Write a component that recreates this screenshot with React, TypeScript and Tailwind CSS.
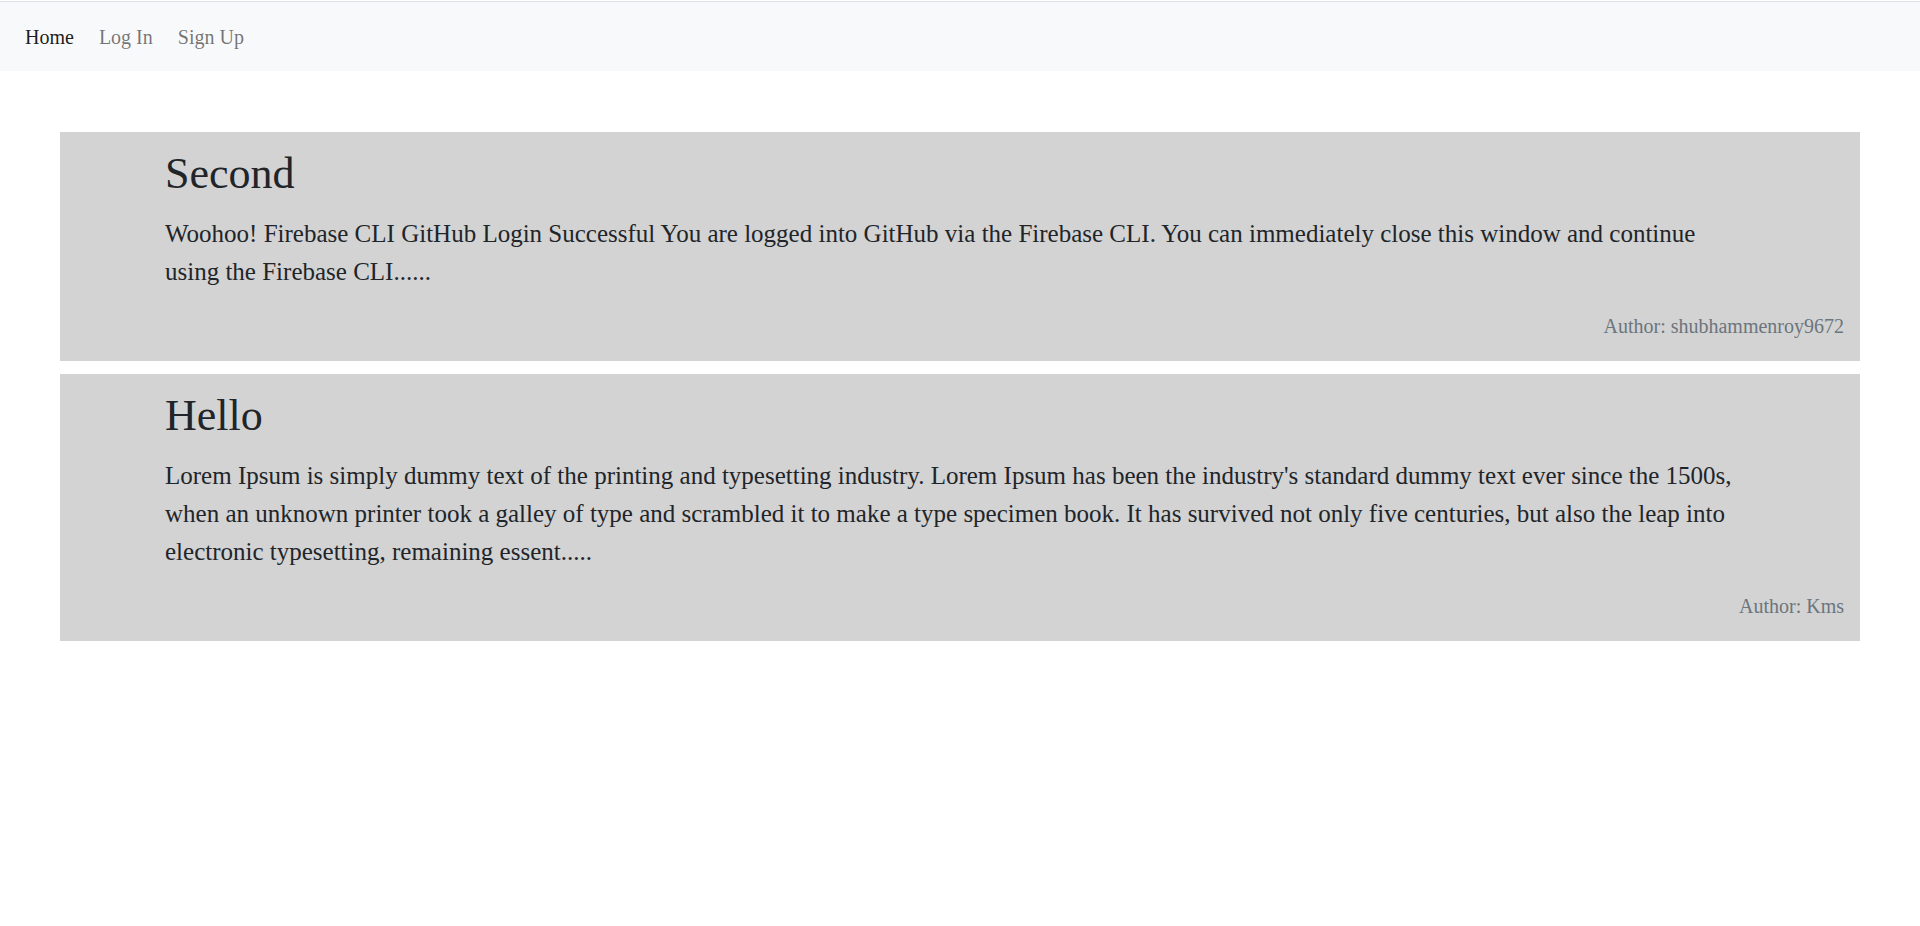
import React from "react";

const posts = [
  {
    title: "Second",
    body: "Woohoo! Firebase CLI GitHub Login Successful You are logged into GitHub via the Firebase CLI. You can immediately close this window and continue using the Firebase CLI......",
    author: "shubhammenroy9672",
  },
  {
    title: "Hello",
    body: "Lorem Ipsum is simply dummy text of the printing and typesetting industry. Lorem Ipsum has been the industry's standard dummy text ever since the 1500s, when an unknown printer took a galley of type and scrambled it to make a type specimen book. It has survived not only five centuries, but also the leap into electronic typesetting, remaining essent.....",
    author: "Kms",
  },
];

export default function App() {
  return (
    <div className="min-h-[926px] bg-white text-[#212529] font-['Liberation_Serif','Times_New_Roman',serif]">
      <div className="pt-px">
        <nav className="h-[70px] border-t border-[#dee2e6] bg-[#f8f9fa] flex items-center px-[12.5px] text-[20px] leading-[30px]">
          <a className="px-[12.5px] text-black/90">Home</a>
          <a className="px-[12.5px] text-black/55">Log In</a>
          <a className="px-[12.5px] text-black/55">Sign Up</a>
        </nav>
      </div>
      <main className="mt-[61px] mx-[60px] flex flex-col gap-[13px]">
        {posts.map((p) => (
          <div key={p.title} className="bg-[#d3d3d3] flex flex-col pt-[15px] pb-[20px]">
            <div className="px-[105px]">
              <h1 className="text-[44px] leading-[53px] font-normal mb-[15px]">{p.title}</h1>
              <p className="text-[25px] leading-[38px]">{p.body}</p>
            </div>
            <div className="mt-[20px] pr-[16px] text-right text-[20px] leading-[30px] text-[#6c757d]">
              Author: {p.author}
            </div>
          </div>
        ))}
      </main>
    </div>
  );
}
